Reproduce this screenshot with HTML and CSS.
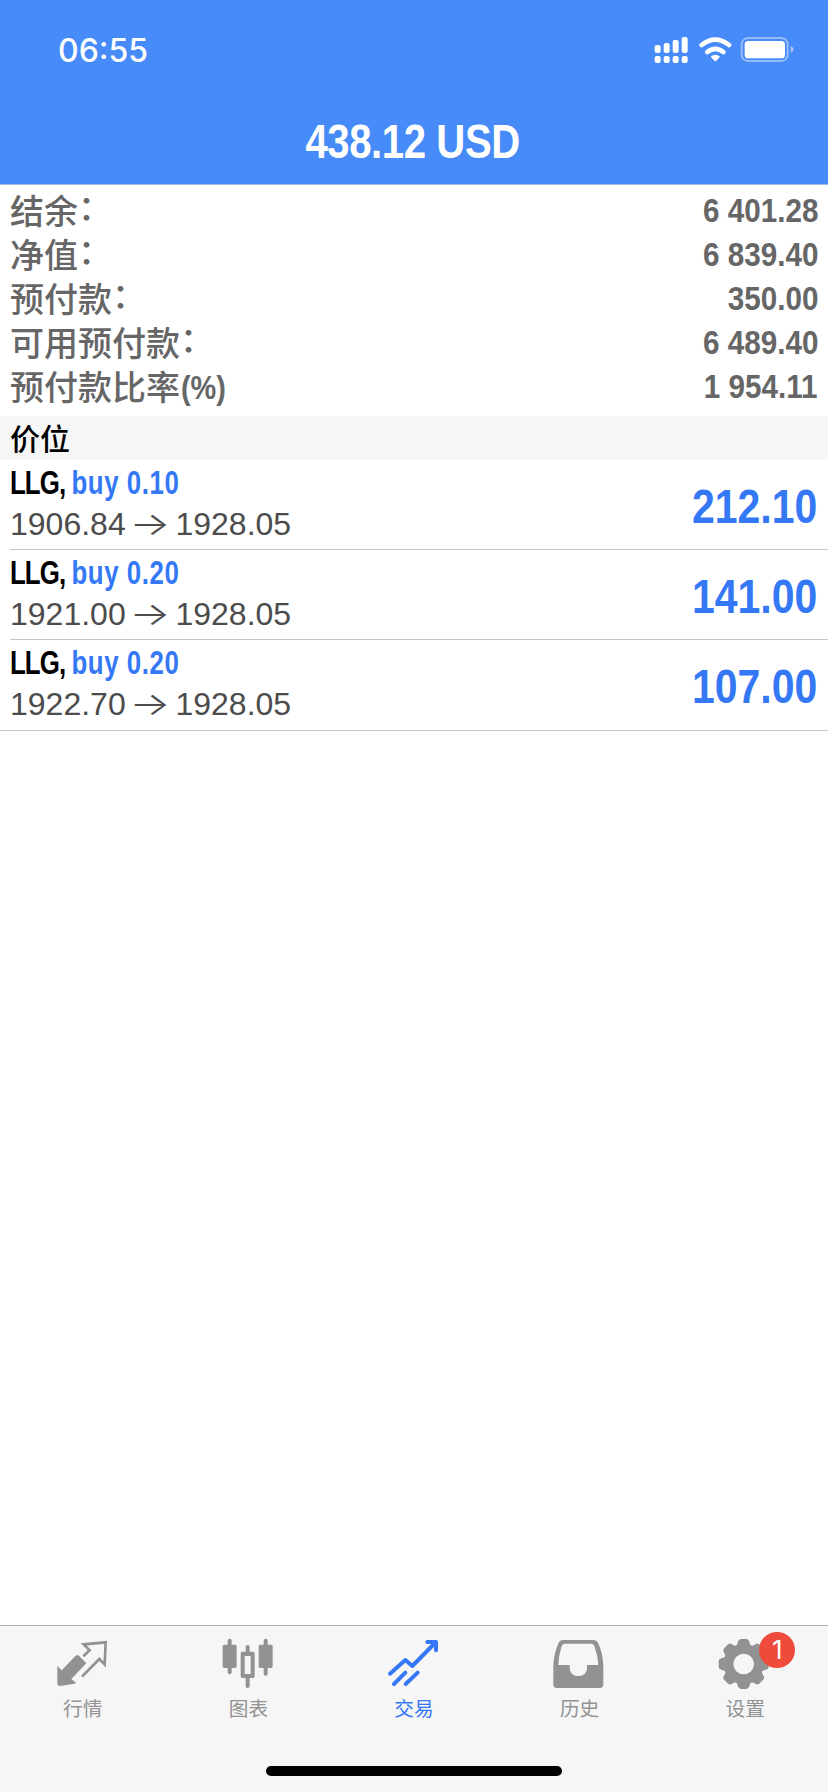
FILE: index.html
```html
<!DOCTYPE html>
<html lang="zh-CN">
<head>
<meta charset="utf-8">
<title>交易</title>
<link rel="stylesheet" href="styles.css">
</head>
<body>
<div class="screen">
  <header class="header">
    <div class="status">
      <span class="time">06:55</span>
      <svg class="status-icons" viewBox="100 45 426 90" fill="#fff">
        <rect x="105" y="75" width="18" height="24" rx="6"/><rect x="132" y="69" width="18" height="30" rx="6"/><rect x="159" y="60" width="18" height="39" rx="6"/><rect x="186" y="51" width="18" height="48" rx="6"/>
        <rect x="105" y="108" width="18" height="21" rx="6"/><rect x="132" y="108" width="18" height="21" rx="6"/><rect x="159" y="108" width="18" height="21" rx="6"/><rect x="186" y="108" width="18" height="21" rx="6"/>
        <path d="M246 75Q287 43 328 75M263 96Q287 77 311 96" fill="none" stroke="#fff" stroke-width="14" stroke-linecap="round"/>
        <path d="M274 109Q287 99 300 109Q301 112 289 123Q287 125 285 123Q273 112 274 109Z"/>
        <rect x="366" y="54" width="138" height="69" rx="19" fill="none" stroke="#fff" stroke-opacity=".42" stroke-width="6"/>
        <rect x="375" y="63" width="121" height="52" rx="11"/>
        <path d="M513 78Q522 82 522 88Q522 95 513 99Z" fill-opacity=".5"/>
      </svg>
    </div>
    <h1 class="title"><span class="cond">438.12 USD</span></h1>
  </header>
  <section class="summary">
    <div class="row"><span class="label">结余<i class="colon">：</i></span><span class="cond value">6 401.28</span></div>
    <div class="row"><span class="label">净值<i class="colon">：</i></span><span class="cond value">6 839.40</span></div>
    <div class="row"><span class="label">预付款<i class="colon">：</i></span><span class="cond value">350.00</span></div>
    <div class="row"><span class="label">可用预付款<i class="colon">：</i></span><span class="cond value">6 489.40</span></div>
    <div class="row"><span class="label">预付款比率<b class="cond unit">(%)</b></span><span class="cond value">1 954.11</span></div>
  </section>
  <h2 class="section">价位</h2>
  <main class="positions">
    <div class="position">
      <div class="info"><div class="cond symbol">LLG, <span class="side">buy 0.10</span></div><div class="prices">1906.84 <span class="arrow">→</span> 1928.05</div></div>
      <div class="cond profit">212.10</div>
    </div>
    <div class="position">
      <div class="info"><div class="cond symbol">LLG, <span class="side">buy 0.20</span></div><div class="prices">1921.00 <span class="arrow">→</span> 1928.05</div></div>
      <div class="cond profit">141.00</div>
    </div>
    <div class="position">
      <div class="info"><div class="cond symbol">LLG, <span class="side">buy 0.20</span></div><div class="prices">1922.70 <span class="arrow">→</span> 1928.05</div></div>
      <div class="cond profit">107.00</div>
    </div>
  </main>
  <footer class="footer">
    <nav class="tabs">
      <a class="tab">
        <svg viewBox="164 78 168 168" fill="currentColor">
          <path d="M171 168L184 181L226 137Q231 133 236 137L258 160L213 207L227 218Q226 221 218 222L180 228Q171 228 171 220Z"/>
          <path d="M249 139L268 121L250 103L316 97L313 163L297 147L245 200" fill="none" stroke="currentColor" stroke-width="8"/>
        </svg>
        <span>行情</span>
      </a>
      <a class="tab">
        <svg viewBox="661 78 168 168" fill="currentColor">
          <rect x="669" y="104" width="42" height="70" rx="5"/><rect x="684" y="86" width="12" height="107" rx="6"/>
          <rect x="777" y="104" width="42" height="70" rx="5"/><rect x="792" y="86" width="12" height="111" rx="6"/>
          <path fill-rule="evenodd" d="M728 125H760Q765 125 765 130V199Q765 204 760 204H728Q723 204 723 199V130Q723 125 728 125ZM735 138V192H753V138Z"/>
          <path d="M744 111V128M744 201V228" stroke="currentColor" stroke-width="12" stroke-linecap="round"/>
        </svg>
        <span>图表</span>
      </a>
      <a class="tab active">
        <svg viewBox="258 78 168 168" fill="none" stroke="currentColor" stroke-width="12" stroke-linecap="round" stroke-linejoin="round">
          <path d="M270 191L316 150L337 168L405 99M382 96H408V121M282 222L316 188M317 222L353 188"/>
          <path d="M390 96L408 96L408 113Z" fill="currentColor" stroke-width="3"/>
        </svg>
        <span>交易</span>
      </a>
      <a class="tab">
        <svg viewBox="95 78 168 168" fill="currentColor">
          <path fill-rule="evenodd" d="M127 90H219Q229 90 233 98Q247 128 249 164V223Q249 234 238 234H110Q99 234 99 223V164Q101 128 115 98Q118 90 127 90ZM134 101Q127 101 124 108Q115 137 114 165H148V176Q151 198 174 198Q197 198 200 176V165H234Q233 137 222 108Q219 101 212 101Z"/>
        </svg>
        <span>历史</span>
      </a>
      <a class="tab">
        <svg viewBox="592 78 168 168">
          <g fill="currentColor">
            <circle cx="672" cy="162" r="60"/>
            <path id="tooth" d="M646 112Q653 106 655 95Q657 87 664 87H680Q687 87 689 95Q691 106 698 112Z"/>
            <use href="#tooth" transform="rotate(45 672 162)"/><use href="#tooth" transform="rotate(90 672 162)"/><use href="#tooth" transform="rotate(135 672 162)"/><use href="#tooth" transform="rotate(180 672 162)"/><use href="#tooth" transform="rotate(225 672 162)"/><use href="#tooth" transform="rotate(270 672 162)"/><use href="#tooth" transform="rotate(315 672 162)"/>
          </g>
          <circle cx="672" cy="162" r="31" fill="#f6f6f6"/>
        </svg>
        <span>设置</span>
        <b class="badge">1</b>
      </a>
    </nav>
    <div class="home"></div>
  </footer>
</div>
</body>
</html>
```
FILE: styles.css
```css
* { box-sizing: border-box; }
body { margin: 0; background: #fff; font-family: "Liberation Sans", "Noto Sans CJK SC", sans-serif; }
.screen { width: 828px; height: 1792px; display: flex; flex-direction: column; }
.header { height: 185px; background: #468bf7; border-bottom: 1px solid #9fbfe0; color: #fff; }
.status { height: 100px; padding: 0 33px 0 58px; display: flex; align-items: center; justify-content: space-between; }
.time { font: 550 32px/40px Inter, sans-serif; letter-spacing: 0; padding-top: 1px; }
.status-icons { width: 142px; height: 30px; }
.cond { display: inline-block; font-family: "Liberation Sans", sans-serif; font-weight: 700; white-space: pre; transform: scaleX(.865); }
.title { margin: 0; padding: 0 2px 0 0; font-size: 48.5px; line-height: 82px; text-align: center; letter-spacing: -0.5px; }
.title .cond { transform: scaleX(.827); }
.summary { padding: 3px 10px 8px; color: #666; }
.row { height: 44px; display: flex; justify-content: space-between; align-items: center; }
.label { height: 44px; padding-top: 4px; font: 500 34px/40px "Liberation Sans", "Noto Sans CJK SC", sans-serif; white-space: nowrap; }
.colon { font-style: normal; position: relative; top: -4px; }
.unit { height: 36px; margin-left: 1px; font-size: 34px; line-height: 36px; vertical-align: 1px; transform: scaleX(.85); transform-origin: left; }
.value { padding-top: 2px; font-size: 33.5px; line-height: 42px; transform: scaleX(.885); transform-origin: right; }
.section { margin: 0; height: 44px; padding: 3px 0 0 10px; background: #f6f6f6; color: #000; font: 500 30px/41px "Liberation Sans", "Noto Sans CJK SC", sans-serif; }
.positions { flex: 1; }
.position { height: 90px; margin-left: 10px; padding-right: 11px; border-bottom: 1px solid #c6c6c8; display: flex; justify-content: space-between; align-items: center; }
.position:last-child { height: 91px; margin-left: 0; padding-left: 10px; padding-bottom: 1px; }
.info { padding-bottom: 2px; display: flex; flex-direction: column; align-items: flex-start; }
.symbol { font-size: 32.5px; line-height: 40px; letter-spacing: -1.15px; transform: scaleX(.795); transform-origin: left; color: #000; }
.side, .profit { color: #3478f6; }
.side { letter-spacing: .7px; }
.prices { font-size: 32px; line-height: 42px; color: #4c4c4c; }
.arrow { display: inline-block; width: 32px; font: 300 32px/32px Inter, sans-serif; text-align: center; transform: translateX(-1px) scaleX(1.34); }
.profit { padding-top: 3px; font-size: 48.5px; line-height: 60px; transform: scaleX(.845); transform-origin: right; }
.footer { height: 167px; background: #f6f6f6; border-top: 1px solid #b3b3b3; display: flex; flex-direction: column; align-items: center; justify-content: space-between; padding-bottom: 16px; }
.tabs { width: 100%; display: grid; grid-template-columns: repeat(5, 1fr); padding-top: 10px; }
.tab { position: relative; display: flex; flex-direction: column; align-items: center; color: #929292; font: 400 19.7px/28px "Noto Sans CJK SC", sans-serif; }
.tab svg { width: 56px; height: 56px; margin-bottom: 2px; }
.tab.active { color: #3478f6; }
.badge { position: absolute; left: 97px; top: -4px; width: 36px; height: 36px; border-radius: 50%; background: #ee4b3c; color: #fff; font: 400 26px/36px Inter, sans-serif; text-align: center; }
.home { width: 296px; height: 10px; border-radius: 5px; background: #000; }
```
